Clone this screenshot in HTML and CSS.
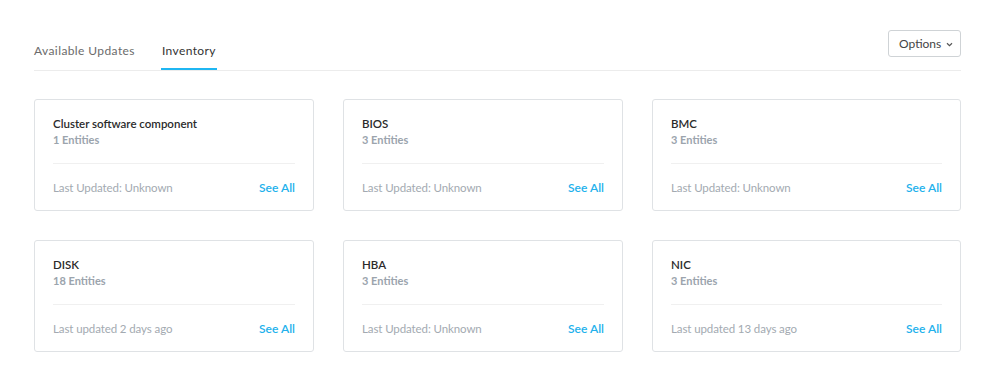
FILE: index.html
```html
<!DOCTYPE html>
<html>
<head>
<meta charset="utf-8">
<link rel="stylesheet" href="styles.css">
</head>
<body>
<div class="page">
  <div class="header">
    <div class="tabs">
      <div class="tab">Available Updates</div>
      <div class="tab active">Inventory</div>
    </div>
    <button class="options">Options
      <svg class="chev" width="7" height="5" viewBox="0 0 7 5"><path d="M1 1.2 L3.5 3.6 L6 1.2" fill="none" stroke="#555" stroke-width="1.2"/></svg>
    </button>
  </div>
  <div class="grid">
    <div class="card">
      <div class="title">Cluster software component</div>
      <div class="count">1 Entities</div>
      <div class="foot"><span class="updated">Last Updated: Unknown</span><a class="see">See All</a></div>
    </div>
    <div class="card">
      <div class="title">BIOS</div>
      <div class="count">3 Entities</div>
      <div class="foot"><span class="updated">Last Updated: Unknown</span><a class="see">See All</a></div>
    </div>
    <div class="card">
      <div class="title">BMC</div>
      <div class="count">3 Entities</div>
      <div class="foot"><span class="updated">Last Updated: Unknown</span><a class="see">See All</a></div>
    </div>
    <div class="card">
      <div class="title">DISK</div>
      <div class="count">18 Entities</div>
      <div class="foot"><span class="updated">Last updated 2 days ago</span><a class="see">See All</a></div>
    </div>
    <div class="card">
      <div class="title">HBA</div>
      <div class="count">3 Entities</div>
      <div class="foot"><span class="updated">Last Updated: Unknown</span><a class="see">See All</a></div>
    </div>
    <div class="card">
      <div class="title">NIC</div>
      <div class="count">3 Entities</div>
      <div class="foot"><span class="updated">Last updated 13 days ago</span><a class="see">See All</a></div>
    </div>
  </div>
</div>
</body>
</html>
```
FILE: styles.css
```css
html, body {
  margin: 0;
  background: #ffffff;
}
body {
  font-family: Lato, "Open Sans", sans-serif;
  color: #333;
}
.page {
  padding: 30px 41px 0 34px;
}
.header {
  display: flex;
  justify-content: space-between;
  align-items: flex-start;
  border-bottom: 1px solid #ececec;
  height: 40px;
}
.tabs {
  display: flex;
  gap: 26px;
  padding-top: 13px;
  height: 27px;
}
.tab {
  font-size: 12px;
  letter-spacing: 0.4px;
  color: #6b6b6b;
  line-height: 16px;
  height: 25px;
  box-sizing: content-box;
}
.tab.active {
  color: #333;
  border-bottom: 2px solid #1fb6f2;
  padding: 0 1px;
}
.options {
  height: 27px;
  width: 73px;
  box-sizing: border-box;
  border: 1px solid #cfd3d6;
  border-radius: 3px;
  background: #fff;
  font-family: Lato, "Open Sans", sans-serif;
  font-size: 12px;
  color: #444;
  padding: 0 0 0 10px;
  display: flex;
  align-items: center;
  gap: 5px;
}
.chev { margin-top: 1px; }
.grid {
  display: grid;
  grid-template-columns: 280px 280px 309px;
  column-gap: 29px;
  row-gap: 29px;
  margin-top: 28px;
}
.card {
  box-sizing: border-box;
  height: 112px;
  border: 1px solid #dfe2e5;
  border-radius: 3px;
  padding: 15px 18px 0;
  display: flex;
  flex-direction: column;
}
.title {
  font-size: 11.5px;
  font-weight: 600;
  line-height: 17px;
  color: #2b2b2b;
}
.count {
  font-size: 11px;
  font-weight: 700;
  line-height: 16px;
  color: #9ba4ad;
}
.foot {
  margin-top: 15px;
  border-top: 1px solid #f0f0f0;
  flex: 1;
  display: flex;
  justify-content: space-between;
  align-items: center;
}
.updated {
  font-size: 11.5px;
  letter-spacing: -0.1px;
  color: #a3aab1;
}
.see {
  font-size: 12px;
  font-weight: 600;
  color: #22b1ec;
}
```
